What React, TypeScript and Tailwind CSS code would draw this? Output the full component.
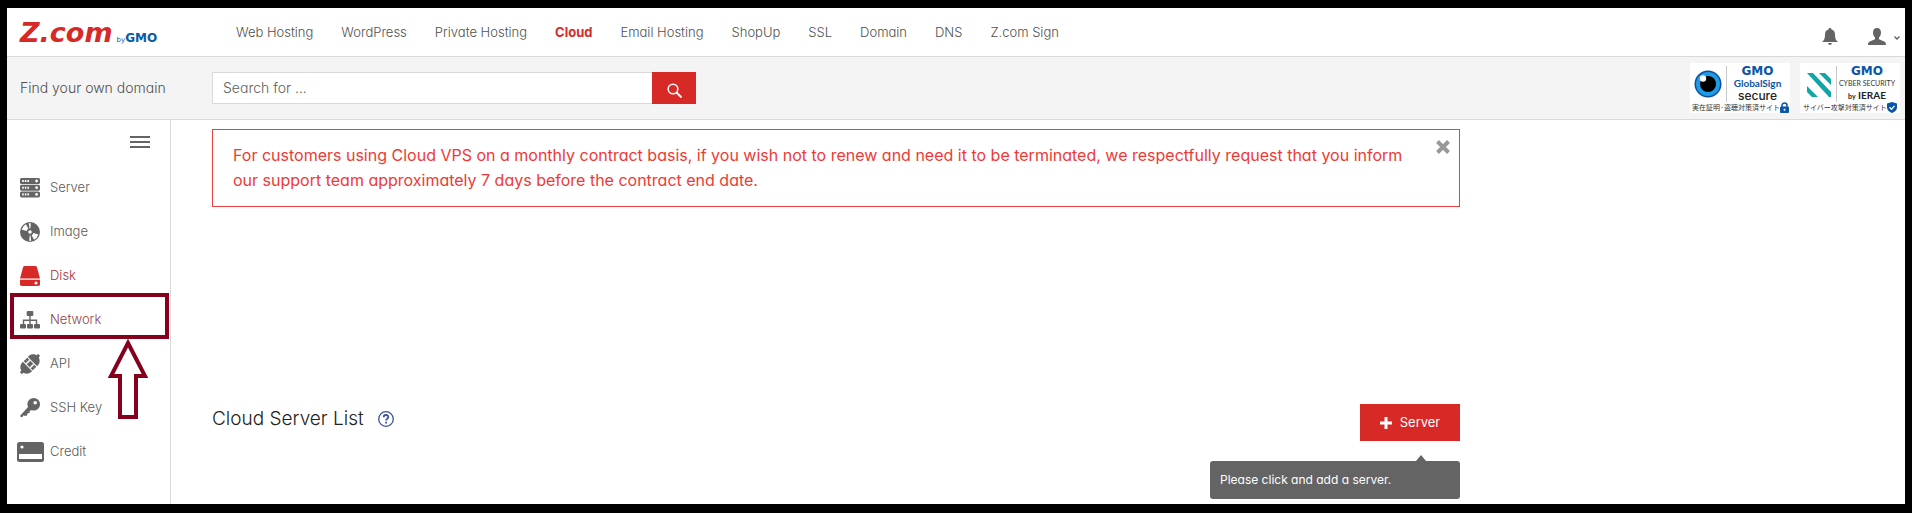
import React from "react";

const services = [
  "Web Hosting",
  "WordPress",
  "Private Hosting",
  "Cloud",
  "Email Hosting",
  "ShopUp",
  "SSL",
  "Domain",
  "DNS",
  "Z.com Sign",
];

function ServerIcon() {
  return (
    <svg width="20" height="20" viewBox="0 0 20 20" fill="currentColor">
      {[0, 6.7, 13.4].map((y) => (
        <g key={y}>
          <rect x="0" y={y} width="20" height="6" rx="1.6" />
          <rect x="2.2" y={y + 2} width="1.6" height="2" fill="#fff" />
          <rect x="4.8" y={y + 2} width="1.6" height="2" fill="#fff" />
          <rect x="7.4" y={y + 2} width="1.6" height="2" fill="#fff" />
          <circle cx="16.6" cy={y + 3} r="1.4" fill="#fff" />
        </g>
      ))}
    </svg>
  );
}

function ImageIcon() {
  return (
    <svg width="20" height="20" viewBox="0 0 20 20" fill="currentColor">
      <circle cx="10" cy="10" r="10" />
      <path d="M10 10 1.600 7.400A9 9 0 0 1 6 2.200zM10 10 8.800 1.300l2-.1zM10 10l8.400 2.600A9 9 0 0 1 14 17.800zM10 10l1.200 8.700-2 .1z" fill="#fff" />
      <circle cx="10" cy="10" r="3.400" />
      <circle cx="10" cy="10" r="1.800" fill="#fff" />
    </svg>
  );
}

function DiskIcon() {
  return (
    <svg width="20" height="20" viewBox="0 0 20 20" fill="currentColor">
      <path d="M4.8 0h10.4q1.4 0 1.8 1.4L20 12.4H0L3 1.4Q3.400 0 4.800 0z" />
      <path d="M0 13.700h20v4.500q0 1.800-1.800 1.800H1.800Q0 20 0 18.200z" />
      <circle cx="16" cy="17" r="1.500" fill="#fff" />
    </svg>
  );
}

function NetworkIcon() {
  return (
    <svg width="20" height="18" viewBox="0 0 20 18" fill="currentColor">
      <rect x="6.700" y="0" width="6.600" height="5" rx="1" />
      <path d="M9.300 5h1.400v3.600h6.500V13h-1.400V10h-5.100v3H9.300v-3H4.200v3H2.800V8.600h6.500z" />
      <rect x="0" y="13" width="6" height="4.500" rx="1" />
      <rect x="7" y="13" width="6" height="4.500" rx="1" />
      <rect x="14" y="13" width="6" height="4.500" rx="1" />
    </svg>
  );
}

function ApiIcon() {
  return (
    <svg width="20" height="20" viewBox="0 0 20 20" fill="currentColor">
      <g transform="rotate(-45 10 10)">
        <rect x="-3" y="8.500" width="26" height="3" rx="1" />
        <path d="M10 3.500v13H5.500C2 16.500-1 13.500-1 10s3-6.500 6.500-6.500z" />
        <path d="M10 3.500v13h4.500c3.500 0 6.500-3 6.500-6.500s-3-6.500-6.500-6.500z" />
        <path d="M7 3v14M13 3v14" stroke="#fff" strokeWidth="1" />
        <path d="M7.500 7.200h5M7.500 12.800h5" stroke="#fff" strokeWidth="1.400" />
      </g>
    </svg>
  );
}

function KeyIcon() {
  return (
    <svg width="20" height="20" viewBox="0 0 20 20" fill="currentColor">
      <circle cx="13.700" cy="6.300" r="6.300" />
      <path d="m8.500 8.500 3 3L5 18l-1.500-.7-1 1.700-1.800.3-.4-1.800z" />
      <path d="m4.500 15 2.400 2.400M7 12.500l2.300 2.300" stroke="currentColor" strokeWidth="1.800" />
      <circle cx="15.200" cy="4.800" r="1.800" fill="#fff" />
    </svg>
  );
}

function CreditIcon() {
  return (
    <svg width="27" height="20" viewBox="0 0 27 20" fill="currentColor" className="-ml-[3px] shrink-0">
      <rect width="27" height="20" rx="2.500" />
      <rect x="2" y="12" width="23" height="5" fill="#fff" />
      <circle cx="5" cy="5" r="1.600" fill="#fff" />
    </svg>
  );
}

const menu = [
  { label: "Server", icon: <ServerIcon /> },
  { label: "Image", icon: <ImageIcon /> },
  { label: "Disk", icon: <DiskIcon /> },
  { label: "Network", icon: <NetworkIcon /> },
  { label: "API", icon: <ApiIcon /> },
  { label: "SSH Key", icon: <KeyIcon /> },
  { label: "Credit", icon: <CreditIcon /> },
];

function labelColor(label: string) {
  if (label === "Disk") return "text-[#a83237]";
  if (label === "Network") return "text-[#8f4247]";
  return "text-[#5a5a5a]";
}

function TopBar() {
  return (
    <header className="flex h-[49px] items-center border-b border-[#d9d9d9] pl-[13px]">
      <a href="#" className="flex w-[216px] items-baseline font-['DejaVu_Sans'] leading-none">
        <span className="text-[27px] font-bold italic text-[#d72a27]">Z.com</span>
        <span className="ml-1 text-[7px] text-[#0a5aa8]">by</span>
        <span className="text-xs font-bold text-[#0a5aa8]">GMO</span>
      </a>
      <nav className="flex gap-7 pt-[2px] font-light text-[#505050]">
        {services.map((name) => (
          <a
            key={name}
            href="#"
            className={name === "Cloud" ? "font-bold text-[#d72a27]" : ""}
          >
            {name}
          </a>
        ))}
      </nav>
      <div className="ml-auto flex items-center gap-[30px] pr-[5px] pt-2">
        <button aria-label="Notifications">
          <svg width="16" height="17" viewBox="0 0 16 17" fill="#646464">
            <path d="M8 0c1 0 1.500.6 1.500 1.500C12 2.200 13 4 13 6.500c0 4 1 6 3 7.500H0c2-1.500 3-3.500 3-7.500 0-2.500 1-4.300 3.500-5C6.500.6 7 0 8 0zM6 15h4q-.5 2-2 2t-2-2z" />
          </svg>
        </button>
        <button aria-label="Account" className="flex items-center gap-2">
          <svg width="18" height="17" viewBox="0 0 18 17" fill="#646464">
            <path d="M9 0c2.700 0 4 1.800 4 4.500 0 2-.8 4-2 5v1.800l5.200 2.200c1.300.6 1.800 1.400 1.800 3.500H0c0-2.100.5-2.900 1.800-3.500L7 11.300V9.500c-1.200-1-2-3-2-5C5 1.800 6.300 0 9 0z" />
          </svg>
          <svg width="6" height="4" viewBox="0 0 6 4" fill="none" stroke="#646464" strokeWidth="1.400" className="mt-1">
            <path d="m.5.5 2.500 2.500L5.500.5" />
          </svg>
        </button>
      </div>
    </header>
  );
}

function Seals() {
  return (
    <div className="ml-auto flex gap-[10px] pr-[5px]">
      <div className="flex h-[50px] w-[100px] flex-col bg-white px-[2px] pt-[3px]">
        <div className="flex h-9 items-center">
          <svg width="33" height="30" viewBox="0 0 33 30" className="shrink-0">
            <circle cx="16" cy="15" r="13.500" fill="#0d4f9e" />
            <circle cx="16" cy="15" r="12" fill="#1f9be6" />
            <circle cx="16" cy="15" r="8" fill="#000" />
            <circle cx="11" cy="9.500" r="3.200" fill="#fff" />
          </svg>
          <div className="ml-[1px] flex h-9 flex-1 flex-col items-center border-l border-[#c8c8c8] font-bold">
            <span className="font-['DejaVu_Sans'] text-xs leading-[11px] text-[#0a55a6]">GMO</span>
            <span className="font-['Lato'] text-[10px] leading-[12px] text-[#0a55a6]">GlobalSign</span>
            <span className="font-['Inter'] text-xs font-medium leading-[13px] text-[#222]">secure</span>
          </div>
        </div>
        <div className="flex h-[11px] items-center whitespace-nowrap font-['Noto_Sans_CJK_JP',sans-serif] text-[7px] leading-none text-[#333]">
          <span>実在証明·盗聴対策済サイト</span>
          <svg width="9" height="11" viewBox="0 0 9 11" className="shrink-0">
            <path d="M2 5V3.500a2.500 2.500 0 0 1 5 0V5" fill="none" stroke="#0a55a6" strokeWidth="1.500" />
            <rect y="4.500" width="9" height="6.500" rx="1" fill="#0a55a6" />
            <circle cx="4.500" cy="7.700" r="1" fill="#fff" />
          </svg>
        </div>
      </div>
      <div className="flex h-[50px] w-[100px] flex-col bg-white px-[3px] pt-[3px]">
        <div className="flex h-9 items-center">
          <svg width="33" height="30" viewBox="0 0 33 30" className="shrink-0">
            <path d="M4 4h6l18 19v5h-2zM4 17l11 11H9l-5-5zM16 4h6l6 6v6z" fill="#12a5a5" />
          </svg>
          <div className="flex h-9 flex-1 flex-col items-center border-l border-[#c8c8c8]">
            <span className="font-['DejaVu_Sans'] text-xs font-bold leading-[11px] text-[#0a55a6]">GMO</span>
            <span className="whitespace-nowrap font-['Lato'] text-[7px] leading-[12px] text-[#333]">CYBER SECURITY</span>
            <span className="font-['Lato'] text-[10px] font-bold leading-[13px] text-[#222]">
              <span className="text-[7px]">by</span> IERAE
            </span>
          </div>
        </div>
        <div className="flex h-[11px] items-center whitespace-nowrap font-['Noto_Sans_CJK_JP',sans-serif] text-[7px] leading-none text-[#333]">
          <span>サイバー攻撃対策済サイト</span>
          <svg width="10" height="11" viewBox="0 0 10 11" className="shrink-0">
            <path d="m5 0 5 1.500v4C10 8 8 10 5 11 2 10 0 8 0 5.500v-4z" fill="#0a55a6" />
            <path d="m2.500 5.300 2 2 3-3.500" fill="none" stroke="#fff" strokeWidth="1.300" />
          </svg>
        </div>
      </div>
    </div>
  );
}

function SearchBar() {
  return (
    <section className="flex h-[63px] items-center border-b border-[#d9d9d9] bg-[#f4f4f4] pl-[13px]">
      <label htmlFor="domain" className="w-48 shrink-0 text-sm font-light text-[#505050]">
        Find your own domain
      </label>
      <form className="flex h-8">
        <input
          id="domain"
          type="text"
          placeholder="Search for ..."
          className="w-[440px] border border-r-0 border-[#d9d9d9] bg-white px-[10px] text-sm font-light placeholder:text-[#606060]"
        />
        <button type="button" aria-label="Search" className="flex w-11 items-center justify-center bg-[#d72a27]">
          <svg width="15" height="15" viewBox="0 0 15 15" fill="none" stroke="#fff" strokeWidth="1.500" className="mt-1">
            <circle cx="6" cy="6" r="4.800" />
            <path d="m9.500 9.500 5 5" strokeWidth="2" />
          </svg>
        </button>
      </form>
      <Seals />
    </section>
  );
}

function Sidebar() {
  return (
    <aside className="relative w-[164px] shrink-0 border-r border-[#d9d9d9] pt-4">
      <div className="flex justify-end pr-5">
        <button aria-label="Toggle menu" className="flex w-5 flex-col gap-[3px]">
          <span className="h-[2px] w-full bg-[#646464]" />
          <span className="h-[2px] w-full bg-[#646464]" />
          <span className="h-[2px] w-full bg-[#646464]" />
        </button>
      </div>
      <nav className="pt-[18px]">
        {menu.map(({ label, icon }) => (
          <a key={label} href="#" className={`flex h-11 items-center pl-[13px] font-light ${labelColor(label)}`}>
            <span className={`flex w-[30px] ${label === "Disk" ? "text-[#d72a27]" : "text-[#646464]"}`}>{icon}</span>
            {label}
          </a>
        ))}
      </nav>
      {/* Callout around the Network entry */}
      <div className="pointer-events-none absolute left-[3px] top-[173px] h-[46px] w-[159px] border-4 border-[#84001c]" />
      <svg
        width="40"
        height="80"
        viewBox="0 0 40 80"
        className="pointer-events-none absolute left-[101px] top-[219px]"
      >
        <path d="M20 4 37 37H28V78H12V37H3z" fill="#fff" stroke="#84001c" strokeWidth="4" />
      </svg>
    </aside>
  );
}

export default function App() {
  return (
    <div className="flex min-h-screen flex-col border-x-[7px] border-b-[9px] border-t-8 border-black bg-white font-['Inter',sans-serif] text-[13px] text-[#646464] [font-feature-settings:'cv11']">
      <TopBar />
      <SearchBar />
      <div className="flex flex-1">
        <Sidebar />
        <main className="flex-1 pl-[41px] pt-[9px]">
          <div className="max-w-[1248px]">
            <div className="relative border border-[#e8403c] py-[13px] pl-5 pr-9 text-base leading-[25px] text-[#ee3a36]">
              For customers using Cloud VPS on a monthly contract basis, if you wish not to renew and need it to be
              terminated, we respectfully request that you inform our support team approximately 7 days before the
              contract end date.
              <button aria-label="Close" className="absolute right-[9px] top-[10px]">
                <svg width="14" height="14" viewBox="0 0 14 14" stroke="#999" strokeWidth="4">
                  <path d="m1.500 1.500 11 11m0-11-11 11" />
                </svg>
              </button>
            </div>
            <div className="mt-[197px] flex items-start justify-between">
              <h1 className="flex items-center gap-[14px] text-[19px] font-light leading-[29px] text-[#222]">
                Cloud Server List
                <svg width="16" height="16" viewBox="0 0 16 16" fill="none" stroke="#3b4f9a" strokeWidth="1.300">
                  <circle cx="8" cy="8" r="7.300" />
                  <path d="M5.700 6.200C5.700 3.300 10.300 3.300 10.300 6c0 1.700-2.200 1.700-2.200 3.500M8.100 10.800v1.700" strokeWidth="1.800" />
                </svg>
              </h1>
              <div className="relative">
                <button className="flex h-[37px] w-[100px] items-center justify-center gap-2 bg-[#d72a27] text-white">
                  <svg width="12" height="12" viewBox="0 0 12 12" stroke="#fff" strokeWidth="3">
                    <path d="M6 0v12M0 6h12" />
                  </svg>
                  Server
                </button>
                <div
                  role="tooltip"
                  className="absolute right-0 top-[57px] flex h-[38px] w-[250px] items-center rounded-[3px] bg-[#646464] px-[10px] text-xs text-white"
                >
                  Please click and add a server.
                  <svg width="10" height="6" viewBox="0 0 10 6" fill="#646464" className="absolute -top-[6px] right-[34px]">
                    <path d="m5 0 5 6H0z" />
                  </svg>
                </div>
              </div>
            </div>
          </div>
        </main>
      </div>
    </div>
  );
}
